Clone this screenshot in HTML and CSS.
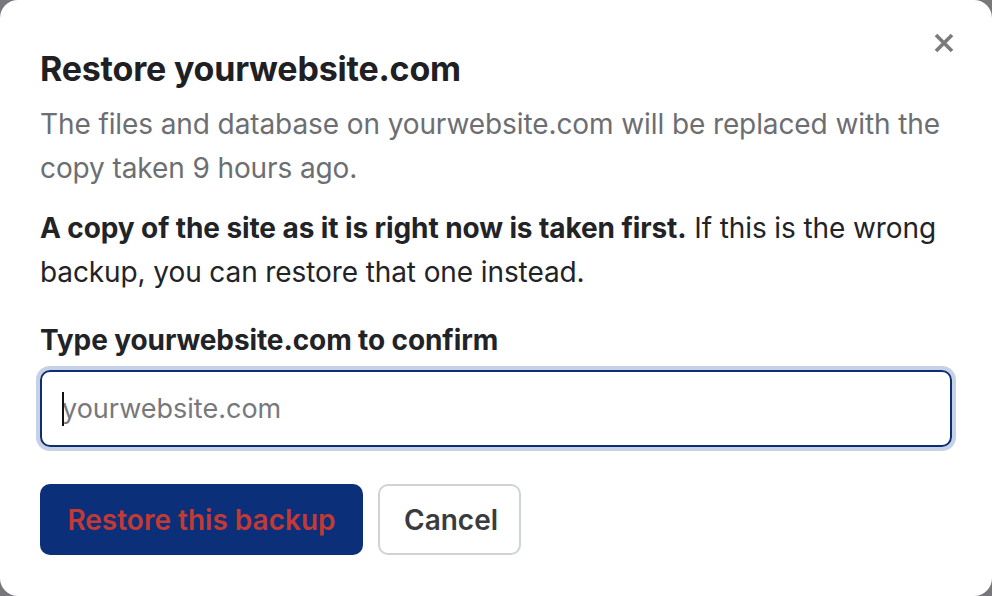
FILE: index.html
```html
<!DOCTYPE html>
<html lang="en">
<head>
<meta charset="utf-8">
<title>Restore</title>
<link rel="stylesheet" href="styles.css">
</head>
<body>
<div class="modal">
  <button class="close" aria-label="Close">
    <svg width="22" height="22" viewBox="0 0 22 22"><path d="M3 3 L19 19 M19 3 L3 19" stroke="#7b7b7e" stroke-width="3.6" stroke-linecap="butt"/></svg>
  </button>
  <h1 class="title">Restore yourwebsite.com</h1>
  <p class="muted">The files and database on yourwebsite.com will be replaced with the copy taken 9 hours ago.</p>
  <p class="body"><strong>A copy of the site as it is right now is taken first.</strong> If this is the wrong backup, you can restore that one instead.</p>
  <label class="label" for="confirm">Type yourwebsite.com to confirm</label>
  <div class="field"><span class="caret"></span><input id="confirm" class="input" placeholder="yourwebsite.com"></div>
  <div class="actions">
    <button class="btn btn-primary">Restore this backup</button>
    <button class="btn btn-secondary">Cancel</button>
  </div>
</div>
</body>
</html>
```

FILE: styles.css
```css
* { box-sizing: border-box; }
html, body { margin: 0; padding: 0; }
body {
  background: #77777c;
  font-family: Inter, "Noto Sans", "Liberation Sans", sans-serif;
  width: 992px;
  height: 596px;
  overflow: hidden;
}
.modal {
  position: relative;
  background: #fff;
  width: 992px;
  height: 596px;
  border-radius: 18px;
  padding: 48px 40px 0 40px;
}
.close {
  position: absolute;
  top: 32px;
  left: 933px;
  background: none;
  border: 0;
  padding: 0;
  width: 22px;
  height: 22px;
  cursor: pointer;
}
.close svg { display: block; }
.title {
  margin: 0;
  font-size: 34px;
  font-weight: 700;
  color: #1f2023;
  line-height: 42px;
  letter-spacing: -0.2px;
}
.muted {
  margin: 12px 0 0 0;
  font-size: 28px;
  line-height: 44px;
  color: #6c6e72;
  max-width: 912px;
  letter-spacing: -0.1px;
}
.body {
  margin: 16px 0 0 0;
  font-size: 28px;
  line-height: 44px;
  color: #222327;
  max-width: 912px;
  letter-spacing: -0.1px;
}
.body strong { font-weight: 700; }
.label {
  display: block;
  margin-top: 24px;
  font-size: 28px;
  line-height: 44px;
  font-weight: 700;
  color: #222327;
  letter-spacing: -0.1px;
}
.field {
  position: relative;
  margin-top: 8px;
  width: 912px;
  height: 77px;
  border: 2px solid #0b2f72;
  border-radius: 10px;
  box-shadow: 0 0 0 4px #c7d1e6;
}
.input {
  width: 100%;
  height: 100%;
  border: 0;
  outline: none;
  background: transparent;
  padding: 0 0 0 20px;
  font-family: inherit;
  font-size: 27px;
  color: #222;
  border-radius: 10px;
}
.input::placeholder { color: #77787c; }
.caret {
  position: absolute;
  left: 20px;
  top: 20px;
  width: 2px;
  height: 34px;
  background: #111;
}
.actions {
  display: flex;
  gap: 15px;
  margin-top: 37px;
}
.btn {
  font-family: inherit;
  font-size: 28px;
  font-weight: 600;
  height: 71px;
  border-radius: 10px;
  padding: 0 24px;
  cursor: pointer;
}
.btn-primary {
  background: #0b2f79;
  color: #c23a35;
  border: 0;
  width: 323px;
}
.btn-secondary {
  background: #fff;
  color: #3a3b3f;
  border: 2px solid #cfd3d8;
  width: 143px;
}
```
